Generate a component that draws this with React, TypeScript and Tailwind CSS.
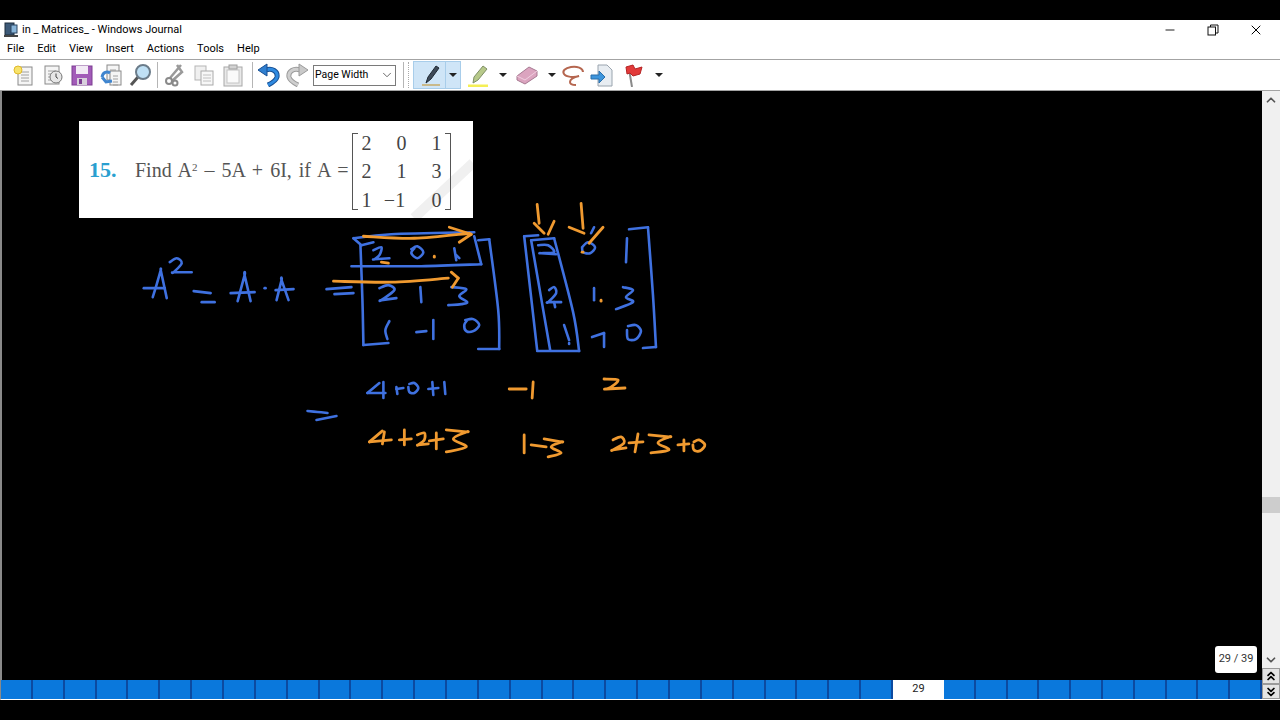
import React from "react";
import { ChevronDown, ChevronUp, ChevronsDown, ChevronsUp, Minus, X } from "lucide-react";

type Stroke = number[][];

// ink strokes, in screen coordinates. a repeated point makes a sharp corner
const blueInk: Stroke[] = [
  [[151, 297], [155, 284], [159, 270], [159, 270], [162, 284], [165, 298]],
  [[142, 288], [163, 288]],
  [[168, 262], [175, 258], [180, 263], [172, 272], [172, 272], [190, 272]],
  [[192, 291], [209, 293]],
  [[200, 302], [213, 302]],
  [[236, 301], [243, 275], [243, 275], [249, 301]],
  [[229, 293], [253, 292]],
  [[263, 288], [264, 288]],
  [[275, 300], [280, 280], [280, 280], [287, 300]],
  [[274, 290], [292, 289]],
  [[325, 289], [350, 287]],
  [[333, 294], [352, 293]],
  [[352, 238], [390, 234], [473, 232]],
  [[352, 238], [360, 245]],
  [[360, 245], [372, 242]],
  [[359, 245], [361, 300], [362, 345]],
  [[362, 345], [387, 343]],
  [[473, 236], [480, 264]],
  [[350, 266], [420, 266], [480, 264]],
  [[477, 240], [488, 239]],
  [[488, 239], [497, 310], [498, 349]],
  [[498, 349], [477, 349]],
  [[372, 250], [380, 247], [378, 255], [373, 259], [373, 259], [388, 258]],
  [[410, 249], [416, 246], [422, 252], [416, 258], [410, 253], [413, 248]],
  [[453, 248], [455, 260]],
  [[455, 255], [458, 258]],
  [[378, 288], [387, 285], [393, 290], [380, 300], [380, 300], [395, 298]],
  [[419, 287], [420, 302]],
  [[450, 287], [465, 289], [458, 296], [466, 302], [460, 304], [447, 305]],
  [[388, 321], [384, 330], [386, 339]],
  [[415, 332], [425, 331]],
  [[432, 320], [432, 339]],
  [[464, 320], [472, 319], [478, 325], [472, 331], [465, 331], [463, 325], [466, 320]],
  [[537, 235], [523, 236]],
  [[523, 236], [536, 350]],
  [[536, 351], [578, 351]],
  [[578, 351], [572, 312], [553, 238]],
  [[553, 238], [530, 240]],
  [[530, 240], [549, 350]],
  [[537, 245], [547, 245], [553, 252], [540, 253], [540, 253], [555, 254]],
  [[548, 290], [553, 287], [555, 293], [547, 302], [547, 302], [560, 302]],
  [[553, 302], [554, 307]],
  [[563, 325], [568, 340]],
  [[568, 343], [568, 344]],
  [[593, 227], [590, 233]],
  [[581, 247], [587, 242], [594, 247], [589, 253], [582, 252], [581, 247]],
  [[626, 238], [625, 262]],
  [[628, 229], [647, 227]],
  [[647, 227], [652, 295], [655, 347]],
  [[655, 347], [642, 348]],
  [[593, 288], [593, 300]],
  [[622, 287], [632, 290], [625, 297], [632, 302], [615, 309]],
  [[591, 337], [603, 333]],
  [[603, 333], [603, 347]],
  [[627, 326], [635, 325], [640, 331], [635, 339], [627, 339], [626, 330]],
  [[306, 411], [316, 412], [326, 413]],
  [[315, 420], [335, 416]],
  [[378, 383], [366, 393]],
  [[366, 393], [384, 393]],
  [[382, 382], [382, 398]],
  [[395, 387], [396, 394]],
  [[395, 389], [402, 388]],
  [[408, 384], [413, 383], [417, 388], [413, 393], [408, 392], [407, 387]],
  [[427, 389], [437, 388]],
  [[431, 382], [432, 395]],
  [[443, 382], [444, 394]],
];

const orangeInk: Stroke[] = [
  [[362, 236], [413, 238], [468, 233]],
  [[448, 227], [470, 234]],
  [[470, 234], [458, 242]],
  [[380, 262], [387, 263]],
  [[433, 256], [433, 257]],
  [[332, 281], [390, 282], [447, 278]],
  [[450, 272], [457, 278]],
  [[457, 278], [451, 287]],
  [[536, 204], [538, 223]],
  [[533, 223], [543, 233]],
  [[553, 221], [547, 234]],
  [[580, 203], [582, 228]],
  [[568, 227], [583, 233]],
  [[602, 227], [588, 243]],
  [[581, 252], [582, 252]],
  [[600, 300], [600, 301]],
  [[508, 389], [525, 389]],
  [[532, 382], [531, 398]],
  [[603, 379], [617, 380], [610, 387], [605, 389], [605, 389], [624, 388]],
  [[381, 431], [368, 442]],
  [[368, 442], [390, 440]],
  [[383, 432], [381, 444]],
  [[398, 440], [410, 439]],
  [[403, 430], [403, 445]],
  [[416, 435], [423, 433], [423, 440], [417, 445], [417, 445], [427, 444]],
  [[428, 441], [442, 439]],
  [[435, 433], [435, 449]],
  [[445, 430], [465, 432], [465, 432], [452, 439], [465, 447], [445, 452]],
  [[523, 435], [523, 453]],
  [[530, 445], [545, 447]],
  [[543, 439], [560, 442], [560, 442], [550, 447], [560, 453], [547, 457]],
  [[612, 440], [620, 437], [623, 443], [612, 450], [612, 450], [625, 448]],
  [[628, 443], [642, 442]],
  [[637, 434], [634, 452]],
  [[648, 435], [668, 437], [668, 437], [657, 443], [668, 450], [650, 453]],
  [[677, 445], [688, 444]],
  [[683, 440], [683, 451]],
  [[693, 442], [698, 440], [704, 445], [699, 451], [693, 450], [692, 445]],
];

function smooth(pts: Stroke) {
  let d = `M${pts[0][0]} ${pts[0][1]}`;
  for (let i = 0; i < pts.length - 1; i++) {
    const p0 = pts[i - 1] || pts[i];
    const p1 = pts[i];
    const p2 = pts[i + 1];
    const p3 = pts[i + 2] || p2;
    const c1x = p1[0] + (p2[0] - p0[0]) / 6;
    const c1y = p1[1] + (p2[1] - p0[1]) / 6;
    const c2x = p2[0] - (p3[0] - p1[0]) / 6;
    const c2y = p2[1] - (p3[1] - p1[1]) / 6;
    d += `C${c1x} ${c1y} ${c2x} ${c2y} ${p2[0]} ${p2[1]}`;
  }
  return d;
}

const Ink = () => (
  <svg
    className="absolute inset-0 h-full w-full"
    viewBox="0 91 1262 589"
    fill="none"
    strokeLinecap="round"
    strokeLinejoin="round"
    strokeWidth="2.6"
  >
    {blueInk.map((s, i) => (
      <path key={i} d={smooth(s)} stroke="#3f71e0" />
    ))}
    {orangeInk.map((s, i) => (
      <path key={i} d={smooth(s)} stroke="#f09a30" strokeWidth="2.8" />
    ))}
  </svg>
);

const Icon = ({ children, className = "" }: { children: React.ReactNode; className?: string }) => (
  <svg viewBox="0 0 24 24" className={`h-6 w-6 shrink-0 ${className}`}>
    {children}
  </svg>
);

const Sheet = ({ x = 6, y = 3, w = 14, h = 18 }) => (
  <>
    <rect x={x} y={y} width={w} height={h} fill="#f5f5f5" stroke="#8a8a8a" />
    <path
      d={`M${x + 3} ${y + 5}h${w - 6}M${x + 3} ${y + 8}h${w - 6}M${x + 3} ${y + 11}h${w - 6}M${x + 3} ${y + 14}h${w - 6}`}
      stroke="#a0a0a0"
    />
  </>
);

const Caret = ({ className = "" }: { className?: string }) => (
  <span className={`h-0 w-0 border-x-[4px] border-t-[4px] border-x-transparent border-t-[#222] ${className}`} />
);

const Sep = ({ className = "" }: { className?: string }) => (
  <span className={`h-[26px] w-px bg-[#b5b5b5] ${className}`} />
);

const Toolbar = () => (
  <div className="flex h-[32px] items-center border-y border-[#a3a3a3] bg-white pl-[11px]">
    <Icon>
      <Sheet x={7} y={4} w={14} h={18} />
      <circle cx="7" cy="7" r="4" fill="#f7e36b" stroke="#e0b92c" />
    </Icon>
    <Icon className="ml-[6px]">
      <Sheet x={4} y={3} w={14} h={18} />
      <circle cx="15" cy="14" r="6" fill="#e6e6e6" stroke="#777" />
      <path d="M15 10.5V14l2 1.5" stroke="#444" fill="none" />
    </Icon>
    <Icon className="ml-[5px]">
      <rect x="2" y="3" width="20" height="19" fill="#a25bb8" stroke="#7c3f92" />
      <rect x="6" y="3" width="12" height="8" fill="#f2eaf5" />
      <rect x="7" y="15" width="10" height="7" fill="#d8d0dc" />
      <rect x="9" y="16" width="3" height="5" fill="#7c3f92" />
    </Icon>
    <Icon className="ml-[5px]">
      <Sheet x={8} y={2} w={12} h={15} />
      <Sheet x={11} y={8} w={11} h={14} />
      <path d="M3 14c1-5 5-6 8-4M3 14l4 5 6-1" fill="none" stroke="#3f85cf" strokeWidth="3" />
    </Icon>
    <Icon className="ml-[5px]">
      <path d="M10 14l-7 8" stroke="#555" strokeWidth="3" />
      <circle cx="15" cy="9" r="7" fill="#bfe0f5" stroke="#6b7c8a" strokeWidth="2" />
    </Icon>
    <Sep className="ml-[5px]" />
    <Icon className="ml-[4px]">
      <path d="M19 2L8 15M15 2l5 7-10 9" fill="none" stroke="#9a9a9a" strokeWidth="2.5" />
      <circle cx="7" cy="18" r="3" fill="none" stroke="#8a8a8a" strokeWidth="2" />
      <circle cx="13" cy="20" r="2.5" fill="none" stroke="#8a8a8a" strokeWidth="2" />
    </Icon>
    <Icon className="ml-[6px]">
      <rect x="3" y="3" width="11" height="14" fill="#f0f0f0" stroke="#b5b5b5" />
      <rect x="9" y="8" width="12" height="14" fill="#f7f7f7" stroke="#aaa" />
      <path d="M11 12h8M11 15h8M11 18h8" stroke="#c0c0c0" />
    </Icon>
    <Icon className="ml-[5px]">
      <rect x="3" y="4" width="18" height="19" fill="#e9e9e9" stroke="#a8a8a8" />
      <rect x="6" y="7" width="12" height="13" fill="#fafafa" stroke="#c4c4c4" />
      <rect x="8" y="2" width="8" height="4" fill="#d2d2d2" stroke="#a0a0a0" />
    </Icon>
    <Sep className="ml-[7px]" />
    <Icon className="ml-[4px]">
      <path d="M9 7c6-2 12 1 11 7-1 4-5 6-9 8" fill="none" stroke="#184f92" strokeWidth="5" />
      <path d="M9 7c6-2 12 1 11 7-1 4-5 6-9 8" fill="none" stroke="#2f8ae0" strokeWidth="3" />
      <path d="M10 1v12L1 7z" fill="#2f7fd0" stroke="#184f92" />
    </Icon>
    <Icon className="ml-[4px]">
      <path d="M15 7C9 5 3 8 4 14c1 4 5 6 9 8" fill="none" stroke="#9c9c9c" strokeWidth="5" />
      <path d="M15 7C9 5 3 8 4 14c1 4 5 6 9 8" fill="none" stroke="#cfcfcf" strokeWidth="3" />
      <path d="M14 1v12l9-6z" fill="#c9c9c9" stroke="#9a9a9a" />
    </Icon>
    <div className="ml-[4px] flex h-[21px] w-[83px] items-center justify-between whitespace-nowrap border border-[#7a7a7a] bg-white pl-[1px] pr-[1px] text-[10.5px] leading-none text-black">
      <span>Page Width</span>
      <ChevronDown className="h-[14px] w-[14px] text-[#555]" strokeWidth={1.5} />
    </div>
    <Sep className="ml-[7px]" />
    <span className="ml-[4px] h-[26px] w-[2px] border-l border-dotted border-[#aaa]" />
    <div className="ml-[3px] flex h-[28px] w-[48px] items-center border border-[#a8cdea] bg-[#cfe5f7]">
      <div className="flex h-full w-[32px] items-center justify-center border-r border-[#a8cdea]">
        <svg viewBox="0 0 24 24" className="h-6 w-6">
          <path d="M4 22h18" stroke="#c9b98a" strokeWidth="2" />
          <path d="M8 20l2-6L18 3l3 2-8 11z" fill="#3e4a58" stroke="#1f2933" />
        </svg>
      </div>
      <Caret className="mx-auto" />
    </div>
    <Icon className="ml-[5px]">
      <path d="M2 23h20" stroke="#f5ef55" strokeWidth="3" />
      <path d="M7 20l1-6 9-11 4 3-9 11z" fill="#b7c98a" stroke="#7f8f66" />
    </Icon>
    <Caret className="ml-[9px]" />
    <Icon className="ml-[8px]">
      <path d="M2 13l12-9 8 4v5l-12 8-8-4z" fill="#dba4bf" stroke="#a77a92" />
      <path d="M2 13l8 4 12-9" fill="none" stroke="#f0cfe0" />
    </Icon>
    <Caret className="ml-[9px]" />
    <Icon className="ml-[5px]">
      <path
        d="M22 9c0-4-6-6-12-5C4 5 1 8 3 11s10 4 15 2c-4 1-9 3-9 6s3 3 6 3"
        fill="none"
        stroke="#b5664f"
        strokeWidth="2"
      />
    </Icon>
    <Icon className="ml-[5px]">
      <path d="M8 2h9l5 5v16H8z" fill="#e8edf2" stroke="#9aa4ae" />
      <path d="M1 12h8V8l6 6-6 6v-4H1z" fill="#3d95dc" stroke="#2a6faa" />
    </Icon>
    <Icon className="ml-[7px]">
      <path d="M8 6l3 18" stroke="#8a8a8a" strokeWidth="2" />
      <path d="M5 4l7-2 2 4 7-2-2 7-7 2-3-3-3 1z" fill="#e23a3a" stroke="#b52424" />
    </Icon>
    <Caret className="ml-[10px]" />
  </div>
);

const ScrollBar = () => (
  <div className="flex w-[18px] shrink-0 flex-col items-center bg-[#f0f0f0] text-[#555]">
    <div className="flex h-[17px] items-center">
      <ChevronUp className="h-[14px] w-[14px]" strokeWidth={3} />
    </div>
    <div className="mt-[389px] h-[16px] w-full bg-[#cdcdcd]" />
    <div className="flex-1" />
    <div className="flex h-[17px] items-center">
      <ChevronDown className="h-[14px] w-[14px]" strokeWidth={3} />
    </div>
    <div className="flex h-[16px] w-full items-center justify-center border border-[#9a9a9a] bg-[#e4e4e4] text-black">
      <ChevronsUp className="h-[14px] w-[14px]" strokeWidth={3} />
    </div>
    <div className="flex h-[15px] w-full items-center justify-center border border-[#9a9a9a] bg-[#e4e4e4] text-black">
      <ChevronsDown className="h-[14px] w-[14px]" strokeWidth={3} />
    </div>
    <div className="h-px w-full bg-white" />
  </div>
);

const matrix = ["2", "0", "1", "2", "1", "3", "1", "−1", "0"];

const QuestionCard = () => (
  <div className="relative ml-[79px] mt-[30px] flex h-[97px] w-[394px] items-center overflow-hidden bg-white font-['Liberation_Serif',serif] text-[#555]">
    <svg className="absolute inset-0 h-full w-full" viewBox="0 0 394 97">
      <path d="M335 97L394 42" stroke="#f0f0f0" strokeWidth="10" />
    </svg>
    <span className="relative ml-[10px] w-[46px] text-[22px] font-bold text-[#2a9fd0]">15.</span>
    <span className="relative w-[217px] whitespace-nowrap text-[20px] [word-spacing:2px]">
      Find A<sup className="text-[11px]">2</sup> – 5A + 6I, if A =
    </span>
    <div className="relative mt-[4px] flex h-[77px] w-[99px] text-[#444]">
      <span className="w-[6px] shrink-0 border-y border-l border-[#555]" />
      <div className="-mx-[9px] -my-[4px] grid w-[105px] shrink-0 grid-cols-3 grid-rows-3 place-items-center text-[20px] leading-none">
        {matrix.map((v, i) => (
          <span key={i} className={v === "−1" ? "mr-[14px]" : ""}>
            {v}
          </span>
        ))}
      </div>
      <span className="w-[6px] shrink-0 border-y border-r border-[#555]" />
    </div>
  </div>
);

const pagesBefore = Array.from({ length: 28 }, (_, i) => i);
const pagesAfter = Array.from({ length: 10 }, (_, i) => i);

const PageBar = () => (
  <div className="flex h-[20px] shrink-0 border-b border-l border-b-white border-l-[#8a8a8a] bg-[#0a78dc] text-[11px] text-[#222]">
    <div className="flex w-[892px]">
      {pagesBefore.map((i) => (
        <span key={i} className="flex-1 border-r-2 border-[#0c4aa0]" />
      ))}
    </div>
    <span className="flex w-[51px] items-center justify-center bg-white">29</span>
    <div className="flex flex-1">
      {pagesAfter.map((i) => (
        <span key={i} className="flex-1 border-r-2 border-[#0c4aa0]" />
      ))}
    </div>
  </div>
);

export default function App() {
  return (
    <div className="flex h-screen flex-col bg-black py-[20px] font-['Roboto',sans-serif]">
      <div className="flex h-[680px] flex-col bg-white text-black">
        <div className="flex h-[19px] shrink-0 items-center pl-[3px] text-[11px]">
          <svg viewBox="0 0 16 16" className="h-[16px] w-[16px]">
            <rect x="2" y="1" width="9" height="12" fill="#3d5a78" stroke="#1c2c3c" />
            <rect x="8" y="3" width="6" height="8" fill="#88b4d8" stroke="#2b4560" />
            <path d="M1 14h14" stroke="#444" strokeWidth="2" />
          </svg>
          <span className="ml-[3px] pt-[1px]">in _ Matrices_ - Windows Journal</span>
          <div className="ml-auto flex h-full items-center">
            <span className="flex w-[43px] justify-center">
              <Minus className="h-[14px] w-[14px]" strokeWidth={1.5} />
            </span>
            <span className="flex w-[43px] justify-center">
              <svg viewBox="0 0 12 12" className="h-[12px] w-[12px]" fill="none" stroke="#111">
                <rect x="1" y="3" width="7.5" height="8" />
                <path d="M3.5 3V1h7.5v8H8.5" />
              </svg>
            </span>
            <span className="flex w-[46px] justify-center pr-[2px]">
              <X className="h-[16px] w-[16px]" strokeWidth={1.5} />
            </span>
          </div>
        </div>
        <div className="flex h-[20px] shrink-0 items-center gap-[13px] pl-[7px] pt-[1px] text-[11px]">
          <span>File</span>
          <span>Edit</span>
          <span>View</span>
          <span>Insert</span>
          <span>Actions</span>
          <span>Tools</span>
          <span>Help</span>
        </div>
        <div className="shrink-0">
          <Toolbar />
        </div>
        <div className="flex min-h-0 flex-1">
          <div className="flex min-w-0 flex-1 flex-col">
            <div className="relative flex-1 border-l-2 border-[#8a8a8a] bg-black">
              <div className="-ml-[2px]">
                <QuestionCard />
              </div>
              <Ink />
              <div className="absolute right-[5px] top-[555px] flex h-[27px] w-[42px] items-center justify-center rounded-[3px] bg-white text-[11px] text-[#333]">
                29 / 39
              </div>
            </div>
            <PageBar />
          </div>
          <ScrollBar />
        </div>
      </div>
    </div>
  );
}
